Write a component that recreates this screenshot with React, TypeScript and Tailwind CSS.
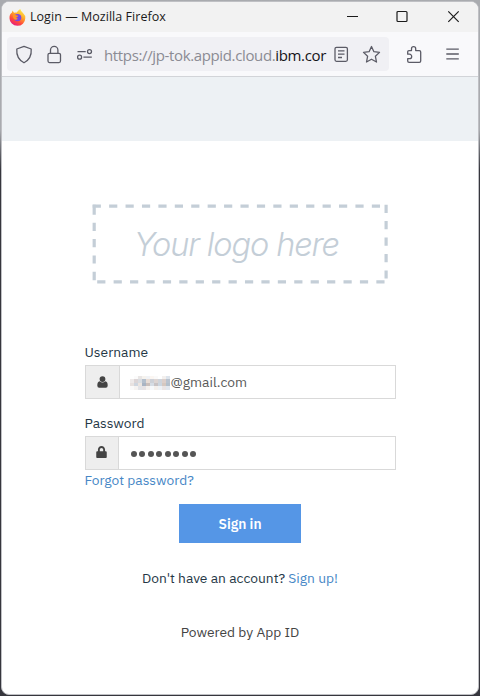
import { FaLock } from "react-icons/fa"

const PIXELS = [
  ["#ffffff", "#fbfbfb", "#e9e6e5", "#f6f3ee", "#f1f3f6", "#fbf6f2", "#fafafa", "#ffffff", "#f3f0ee", "#dde4ec"],
  ["#eeeaea", "#dcd5d6", "#d9dde2", "#b4bfcc", "#e8dcd5", "#cdd1d8", "#ddd5d3", "#cfd4db", "#dccfca", "#b9c3cf"],
  ["#e8e2e0", "#cfd6df", "#ece5e0", "#a9b4c3", "#cabfbb", "#d6dde5", "#c8c3c5", "#ccd6e0", "#d5c8c0", "#b3c0cc"],
  ["#fafafa", "#f6f3f1", "#e3e4e8", "#e6e2e4", "#f5f1ee", "#f6f9fc", "#f4f0ed", "#eef2f6", "#eae5e5", "#e2e8ef"],
]

function FirefoxLogo() {
  return (
    <svg className="h-[17px] w-[17px]" viewBox="0 0 17 17">
      <defs>
        <linearGradient id="flame" x1="0.8" y1="0" x2="0.25" y2="1">
          <stop offset="0" stopColor="#fff44f" />
          <stop offset="0.4" stopColor="#ffa52a" />
          <stop offset="0.7" stopColor="#ff4b3b" />
          <stop offset="1" stopColor="#e31587" />
        </linearGradient>
      </defs>
      <path
        d="M3.5 1.6 5 3.8Q6.2 3.3 7.8 3.5Q8.7 1.6 11.2 0Q11.7 2 14 3.9Q16.6 6.2 16.3 9.3A7.9 7.6 0 0 1 .5 9.2Q.3 5.5 3 3.6Z"
        fill="url(#flame)"
      />
      <circle cx="8.6" cy="8.6" r="3.7" fill="#7548e8" />
      <path d="M4 5.7Q5.8 5 7.1 6.3L9.3 6.7Q9 8 7.3 8.2Q7.3 9.5 9 9.8Q7 11.8 5 10Q3.5 8 4 5.7Z" fill="#ff9424" />
    </svg>
  )
}

function WindowBar() {
  return (
    <div className="flex h-[30px] shrink-0 items-center bg-[#f2f2f2] pr-[18px] pl-[7px]">
      <FirefoxLogo />
      <span className="ml-[4px] font-['Open_Sans',sans-serif] text-[12.5px] tracking-[0.04px] text-[#1b1b1b]">
        Login — Mozilla Firefox
      </span>
      <svg className="ml-auto h-[14px] w-[114px]" viewBox="0 0 114 14" fill="none" stroke="#1b1b1b" strokeWidth="1.2">
        <path d="M1 6.5h11" strokeWidth="1" />
        <rect x="51" y="1.5" width="10" height="10" rx="1" />
        <path d="m102.3 1.4 10.4 10.4m0-10.4-10.4 10.4" />
      </svg>
    </div>
  )
}

function AddressBar() {
  return (
    <div className="flex h-11 shrink-0 items-center bg-[#f9f9fb] pl-[5px]">
      <div className="flex h-[34px] w-[382px] items-center rounded bg-[#f0f0f4]">
        <svg className="h-[34px] w-[97px] shrink-0" viewBox="7 37 97 34" fill="none" stroke="#5b5b66" strokeWidth="1.3">
          <path d="M24 46.3 31.2 49Q32 58.5 24 62.8Q16 58.5 16.8 49Z" strokeLinejoin="round" />
          <rect x="48" y="53.3" width="12.5" height="9.3" rx="1.5" />
          <path d="M50.5 53.3v-3.2a3.7 3.7 0 0 1 7.4 0v3.2" />
          <circle cx="89.5" cy="51.6" r="2" />
          <circle cx="79.6" cy="57.2" r="2" />
          <path d="M77.5 51.6h8.2M83.4 57.2h8.4" />
        </svg>
        <span className="mt-[3px] font-['Open_Sans',sans-serif] text-[15px] tracking-[-0.36px] whitespace-nowrap text-[#8b8b93]">
          https://jp-tok.appid.cloud.<span className="text-[#15141a]">ibm.cor</span>
        </span>
        <svg className="ml-auto h-[34px] w-[62px] shrink-0" viewBox="327 37 62 34" fill="none" stroke="#5b5b66" strokeWidth="1.3">
          <rect x="335" y="47.3" width="12.4" height="14" rx="1.5" />
          <path d="M338 50.8h6.5M338 54.2h6.5M338 57.5h4" />
          <path
            d="m371.5 46.5 2.4 5.2 5.6.7-4.1 3.9 1.1 5.7-5-2.8-5 2.8 1.1-5.7-4.1-3.9 5.6-.7Z"
            strokeLinejoin="round"
          />
        </svg>
      </div>
      <svg className="h-[34px] w-[80px]" viewBox="389 37 80 34" fill="none" stroke="#5b5b66" strokeWidth="1.3">
        <path
          d="M407.7 53.6v-1.8q0-1.2 1.2-1.2h2.6v-1.8a2.1 2.1 0 0 1 4.2 0v1.8h3.6q1.4 0 1.4 1.4v9q0 1.4-1.4 1.4h-10.2q-1.4 0-1.4-1.4v-2.4h1.8a2.2 2.2 0 0 0 0-4.4h-1.8Z"
          strokeLinejoin="round"
        />
        <path d="M446.3 49.2h12.5M446.3 54h12.5M446.3 58.8h12.5" />
      </svg>
    </div>
  )
}

function LogoPlaceholder() {
  return (
    <svg className="mx-auto h-20 w-[296px] shrink-0" viewBox="92 204 296 80">
      <g fill="none" stroke="#c4ced7" strokeWidth="3.2">
        <path d="M92.7 206.2H384" strokeDasharray="8.2 8.22" />
        <path d="M386.1 204.7V283" strokeDasharray="8.2 8.22" />
        <path d="M97.2 281.8H385" strokeDasharray="8.2 8.22" />
        <path d="M94.2 204.7v10M94.2 222.8v8.2M94.2 239.1v8.2M94.2 255.4v8.2M94.2 271.8v8.4" />
      </g>
      <text
        x="134"
        y="256"
        textLength="206"
        fill="#c4ced7"
        className="font-['Inter',sans-serif] text-[32.5px] font-light italic"
      >
        Your logo here
      </text>
    </svg>
  )
}

function UserIcon() {
  return (
    <svg className="h-3 w-[11px]" viewBox="0 0 11 12" fill="currentColor">
      <circle cx="5.5" cy="3.1" r="2.9" />
      <path d="M2.6 5.2Q5.5 7.8 8.4 5.2Q10.7 5.8 10.7 9.4Q10.7 11.7 8.8 11.7H2.2Q.3 11.7.3 9.4Q.3 5.8 2.6 5.2Z" />
    </svg>
  )
}

export default function App() {
  return (
    <div className="flex h-[696px] w-[480px] flex-col overflow-hidden bg-linear-to-b from-[#a9abaf] from-[130px] to-[#36363d] to-[170px] px-px pt-px pb-px font-['IBM_Plex_Sans','Noto_Sans',sans-serif]">
      <div className="flex flex-1 flex-col overflow-hidden rounded-lg border border-[#bfc0c4] bg-white">
        <WindowBar />
        <AddressBar />
        <div className="h-[65px] shrink-0 border-t border-[#d2d4d8] bg-[#edf1f4]" />

        <div className="mt-[63px] flex justify-center">
          <LogoPlaceholder />
        </div>

        <form className="mx-auto mt-[58px] flex w-[311px] flex-col text-[13.8px] text-[#253746]">
          <label className="h-[23px] leading-[20px]">Username</label>
          <div className="flex h-[34px] border border-[#d9d9d9]">
            <div className="flex w-[34px] items-center justify-center border-r border-[#d9d9d9] bg-[#eee] text-[#444]">
              <UserIcon />
            </div>
            <div className="flex items-center pt-px pl-[10px] text-[#5a5a5a]">
              <div className="grid w-[41px] grid-cols-10">
                {PIXELS.flat().map((color, i) => (
                  <span key={i} className="h-[3.5px]" style={{ backgroundColor: color }} />
                ))}
              </div>
              <span>@gmail.com</span>
            </div>
          </div>

          <label className="mt-[14px] h-[23px] leading-[20px]">Password</label>
          <div className="flex h-[34px] border border-[#d9d9d9]">
            <div className="flex w-[33px] items-center justify-center border-r border-[#d9d9d9] bg-[#eee] text-[#444]">
              <FaLock className="-mt-[2px] h-[12px] w-[11px]" />
            </div>
            <div className="flex items-center gap-[2.5px] pt-[2px] pl-[12px]">
              {Array.from({ length: 8 }).map((_, i) => (
                <span key={i} className="h-[6px] w-[6px] rounded-full bg-[#555]" />
              ))}
            </div>
          </div>
          <a className="h-[34px] leading-[21px] text-[#4787c6]">Forgot password?</a>

          <button type="button" className="mx-auto h-[39px] w-[122px] bg-[#5596e6] pt-px font-semibold text-white">
            Sign in
          </button>
          <p className="mt-[25px] text-center leading-[20px] whitespace-nowrap">
            Don't have an account? <a className="text-[#4787c6]">Sign up!</a>
          </p>
          <p className="mt-[34px] text-center leading-[20px] text-[#444]">Powered by App ID</p>
        </form>
      </div>
    </div>
  )
}
